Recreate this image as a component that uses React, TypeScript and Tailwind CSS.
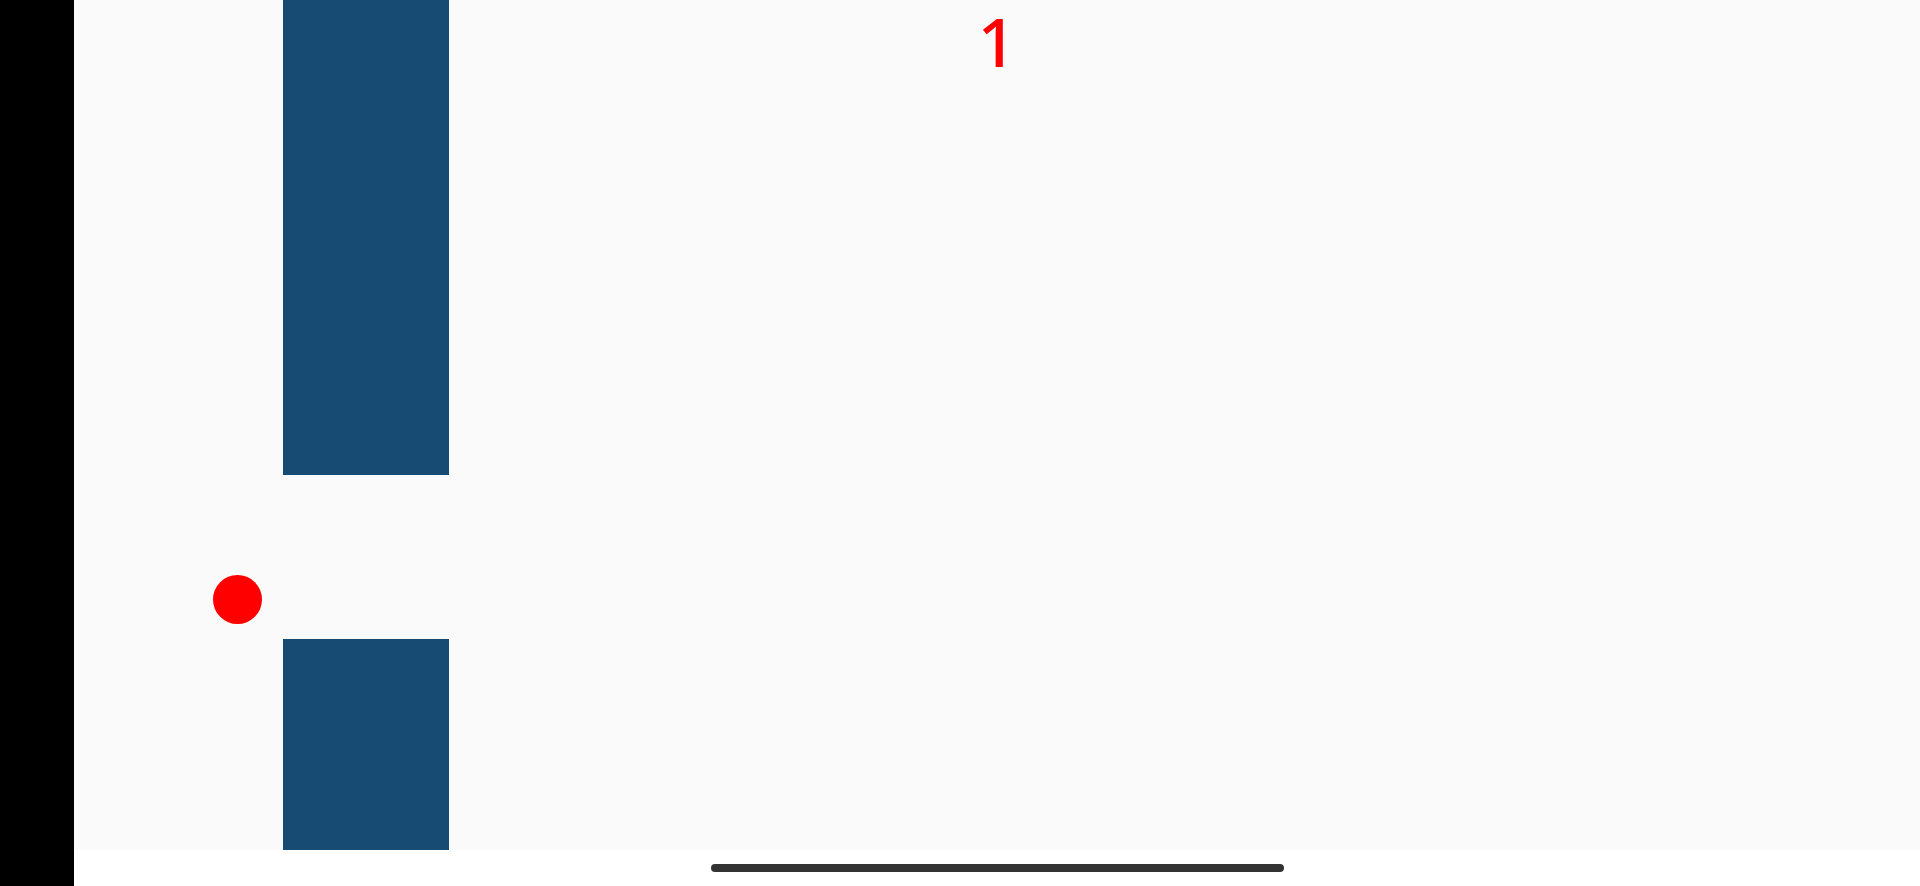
export default function App() {
  return (
    <div className="flex h-[886px] w-[1920px] overflow-hidden bg-white">
      {/* left bezel */}
      <div className="w-[74px] shrink-0 bg-black" />

      <div className="flex flex-1 flex-col">
        {/* game canvas */}
        <div className="relative h-[850px] bg-[#fafafa]">
          <div className="flex justify-center">
            <span
              className="text-[68px] font-medium leading-[1.2] text-[#ff0000]"
              style={{ fontFamily: '"Noto Sans", "Open Sans", sans-serif' }}
            >
              1
            </span>
          </div>

          {/* pipes */}
          <div className="absolute left-[209px] top-0 h-[475px] w-[166px] bg-[#174b74]" />
          <div className="absolute left-[209px] top-[639px] h-[211px] w-[166px] bg-[#174b74]" />

          {/* bird */}
          <div className="absolute left-[139px] top-[575px] h-[49px] w-[49px] rounded-full bg-[#ff0000]" />
        </div>

        {/* home indicator */}
        <div className="flex flex-1 items-start justify-center pt-[14px]">
          <div className="h-[8px] w-[573px] rounded-full bg-[#333333]" />
        </div>
      </div>
    </div>
  )
}
